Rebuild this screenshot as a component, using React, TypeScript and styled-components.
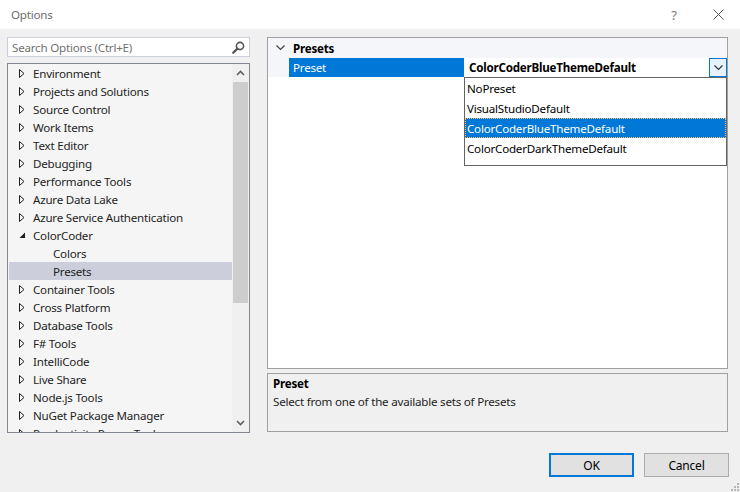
import React from 'react';
import styled, { createGlobalStyle, css } from 'styled-components';

const GlobalStyle = createGlobalStyle`
  html, body {
    margin: 0;
    padding: 0;
    background: #f0f0f0;
  }
  * {
    box-sizing: border-box;
  }
`;

const uiFont = css`
  font-family: 'Segoe UI', 'Noto Sans', 'Open Sans', sans-serif;
  font-size: 11.6px;
  letter-spacing: -0.22px;
  color: #1e1e1e;
`;

const Window = styled.div`
  ${uiFont};
  width: 740px;
  height: 492px;
  background: #f0f0f0;
  display: flex;
  flex-direction: column;
  position: relative;
  overflow: hidden;
`;

const TitleBar = styled.div`
  height: 29px;
  background: #ffffff;
  display: flex;
  align-items: center;
  padding-left: 11px;

  .title {
    color: #6e6e6e;
    flex: 1;
  }
`;

const TitleButton = styled.div`
  width: 44px;
  height: 29px;
  display: flex;
  align-items: center;
  justify-content: center;
  color: #777;
  font-size: 13px;
`;

const Body = styled.div`
  display: grid;
  grid-template-columns: 243px 461px;
  column-gap: 17px;
  padding: 8px 0 0 7px;
`;

const LeftColumn = styled.div`
  display: flex;
  flex-direction: column;
  gap: 6px;
`;

const SearchBox = styled.div`
  height: 20px;
  background: #ffffff;
  border: 1px solid #cccedb;
  display: flex;
  align-items: center;
  padding: 0 4px 0 4px;

  span {
    flex: 1;
    color: #717171;
  }
`;

const Tree = styled.div`
  height: 370px;
  border: 1px solid #828790;
  background: #f5f5f5;
  display: flex;
  overflow: hidden;
`;

const TreeList = styled.div`
  flex: 1;
  padding: 0 0 0 1px;
`;

const TreeRow = styled.div<{ $level: number; $selected?: boolean }>`
  height: 18px;
  display: flex;
  align-items: center;
  padding-left: ${({ $level }) => 10 + $level * 20}px;
  background: ${({ $selected }) => ($selected ? '#cccedb' : 'transparent')};
  white-space: nowrap;
  color: #1e1e1e;

  .exp {
    width: 14px;
    height: 18px;
    display: flex;
    align-items: center;
    flex-shrink: 0;
  }
`;

const Scrollbar = styled.div`
  width: 17px;
  background: #f0f0f0;
  display: flex;
  flex-direction: column;
  align-items: center;
`;

const ScrollArrow = styled.div`
  height: 18px;
  width: 17px;
  display: flex;
  align-items: center;
  justify-content: center;
`;

const ScrollThumb = styled.div`
  width: 15px;
  height: 221px;
  background: #cdcdcd;
  margin-left: -1px;
`;

const ScrollTrack = styled.div`
  flex: 1;
`;

const RightColumn = styled.div`
  display: flex;
  flex-direction: column;
  gap: 4px;
`;

const PropGrid = styled.div`
  height: 332px;
  border: 1px solid #a0a0a0;
  background: #ffffff;
  position: relative;
`;

const CategoryRow = styled.div`
  height: 20px;
  background: #f4f6fa;
  display: flex;
  align-items: center;
  font-weight: bold;
  color: #000;

  .chev {
    width: 25px;
    display: flex;
    justify-content: center;
  }
`;

const PropertyRow = styled.div`
  height: 19px;
  display: grid;
  grid-template-columns: 21px 175px 1fr 18px;
`;

const Gutter = styled.div`
  background: #f4f6fa;
`;

const PropName = styled.div`
  background: #0078d7;
  color: #ffffff;
  padding-left: 4px;
  display: flex;
  align-items: center;
`;

const PropValue = styled.div`
  font-weight: bold;
  padding-left: 5px;
  display: flex;
  align-items: center;
  color: #000;
`;

const DropButton = styled.div`
  border: 1px solid #0078d7;
  background: #e5f1fb;
  display: flex;
  align-items: center;
  justify-content: center;
`;

const DropList = styled.div`
  position: absolute;
  left: 196px;
  top: 39px;
  width: 263px;
  height: 89px;
  background: #ffffff;
  border: 1px solid #646464;
`;

const DropItem = styled.div<{ $active?: boolean }>`
  height: 20px;
  display: flex;
  align-items: center;
  padding-left: 2px;
  background: ${({ $active }) => ($active ? '#0078d7' : 'transparent')};
  color: ${({ $active }) => ($active ? '#ffffff' : '#000000')};
  outline: ${({ $active }) => ($active ? '1px dotted #f4c36b' : 'none')};
  outline-offset: -1px;
`;

const Description = styled.div`
  height: 59px;
  border: 1px solid #a0a0a0;
  background: #f0f0f0;
  padding: 1px 5px;
  line-height: 18px;

  .title {
    font-weight: bold;
    color: #000;
  }
`;

const Footer = styled.div`
  display: flex;
  justify-content: flex-end;
  gap: 10px;
  padding: 20px 11px 0 0;
`;

const Button = styled.div<{ $primary?: boolean }>`
  width: 85px;
  height: 24px;
  display: flex;
  align-items: center;
  justify-content: center;
  background: #e1e1e1;
  border: ${({ $primary }) => ($primary ? '2px solid #0078d7' : '1px solid #adadad')};
  color: #000;
  font-size: 12px;
`;

const Grip = styled.svg`
  position: absolute;
  right: 1px;
  bottom: 1px;
`;

const Collapsed = () => (
  <svg width="6" height="9" viewBox="0 0 6 9">
    <path d="M0.5 0.5 L5 4.5 L0.5 8.5 Z" fill="none" stroke="#1e1e1e" strokeWidth="1" />
  </svg>
);

const Expanded = () => (
  <svg width="7" height="7" viewBox="0 0 7 7">
    <path d="M6 0.5 L6 6 L0.5 6 Z" fill="#1e1e1e" />
  </svg>
);

const ChevronDown = ({ color = '#1e1e1e' }: { color?: string }) => (
  <svg width="9" height="6" viewBox="0 0 9 6">
    <path d="M0.5 0.5 L4.5 4.5 L8.5 0.5" fill="none" stroke={color} strokeWidth="1.2" />
  </svg>
);

const tree: { label: string; level: number; kind: 'c' | 'e' | 'n'; selected?: boolean }[] = [
  { label: 'Environment', level: 0, kind: 'c' },
  { label: 'Projects and Solutions', level: 0, kind: 'c' },
  { label: 'Source Control', level: 0, kind: 'c' },
  { label: 'Work Items', level: 0, kind: 'c' },
  { label: 'Text Editor', level: 0, kind: 'c' },
  { label: 'Debugging', level: 0, kind: 'c' },
  { label: 'Performance Tools', level: 0, kind: 'c' },
  { label: 'Azure Data Lake', level: 0, kind: 'c' },
  { label: 'Azure Service Authentication', level: 0, kind: 'c' },
  { label: 'ColorCoder', level: 0, kind: 'e' },
  { label: 'Colors', level: 1, kind: 'n' },
  { label: 'Presets', level: 1, kind: 'n', selected: true },
  { label: 'Container Tools', level: 0, kind: 'c' },
  { label: 'Cross Platform', level: 0, kind: 'c' },
  { label: 'Database Tools', level: 0, kind: 'c' },
  { label: 'F# Tools', level: 0, kind: 'c' },
  { label: 'IntelliCode', level: 0, kind: 'c' },
  { label: 'Live Share', level: 0, kind: 'c' },
  { label: 'Node.js Tools', level: 0, kind: 'c' },
  { label: 'NuGet Package Manager', level: 0, kind: 'c' },
  { label: 'Productivity Power Tools', level: 0, kind: 'c' },
];

const presets = ['NoPreset', 'VisualStudioDefault', 'ColorCoderBlueThemeDefault', 'ColorCoderDarkThemeDefault'];

export default function App() {
  return (
    <>
      <GlobalStyle />
      <Window>
        <TitleBar>
          <span className="title">Options</span>
          <TitleButton>?</TitleButton>
          <TitleButton>
            <svg width="11" height="11" viewBox="0 0 11 11">
              <path d="M0.5 0.5 L10.5 10.5 M10.5 0.5 L0.5 10.5" stroke="#555" strokeWidth="1" />
            </svg>
          </TitleButton>
        </TitleBar>
        <Body>
          <LeftColumn>
            <SearchBox>
              <span>Search Options (Ctrl+E)</span>
              <svg width="13" height="13" viewBox="0 0 13 13">
                <circle cx="8" cy="5" r="3.6" fill="none" stroke="#555" strokeWidth="1.6" />
                <path d="M5.4 7.6 L1.2 11.8" stroke="#555" strokeWidth="2.2" strokeLinecap="round" />
              </svg>
            </SearchBox>
            <Tree>
              <TreeList>
                {tree.map((item) => (
                  <TreeRow key={item.label} $level={item.level} $selected={item.selected}>
                    <span className="exp">
                      {item.kind === 'c' && <Collapsed />}
                      {item.kind === 'e' && <Expanded />}
                    </span>
                    <span>{item.label}</span>
                  </TreeRow>
                ))}
              </TreeList>
              <Scrollbar>
                <ScrollArrow>
                  <svg width="9" height="6" viewBox="0 0 9 6">
                    <path d="M1 5 L4.5 1.5 L8 5" fill="none" stroke="#606060" strokeWidth="1.6" />
                  </svg>
                </ScrollArrow>
                <ScrollThumb />
                <ScrollTrack />
                <ScrollArrow>
                  <svg width="9" height="6" viewBox="0 0 9 6">
                    <path d="M1 1 L4.5 4.5 L8 1" fill="none" stroke="#606060" strokeWidth="1.6" />
                  </svg>
                </ScrollArrow>
              </Scrollbar>
            </Tree>
          </LeftColumn>
          <RightColumn>
            <PropGrid>
              <CategoryRow>
                <span className="chev">
                  <ChevronDown color="#444" />
                </span>
                Presets
              </CategoryRow>
              <PropertyRow>
                <Gutter />
                <PropName>Preset</PropName>
                <PropValue>ColorCoderBlueThemeDefault</PropValue>
                <DropButton>
                  <ChevronDown color="#333" />
                </DropButton>
              </PropertyRow>
              <DropList>
                {presets.map((p) => (
                  <DropItem key={p} $active={p === 'ColorCoderBlueThemeDefault'}>
                    {p}
                  </DropItem>
                ))}
              </DropList>
            </PropGrid>
            <Description>
              <div className="title">Preset</div>
              <div>Select from one of the available sets of Presets</div>
            </Description>
          </RightColumn>
        </Body>
        <Footer>
          <Button $primary>OK</Button>
          <Button>Cancel</Button>
        </Footer>
        <Grip width="8" height="8" viewBox="0 0 8 8">
          {[
            [6, 0],
            [6, 3],
            [3, 3],
            [6, 6],
            [3, 6],
            [0, 6],
          ].map(([x, y]) => (
            <rect key={`${x}-${y}`} x={x} y={y} width="2" height="2" fill="#b8b8b8" />
          ))}
        </Grip>
      </Window>
    </>
  );
}
